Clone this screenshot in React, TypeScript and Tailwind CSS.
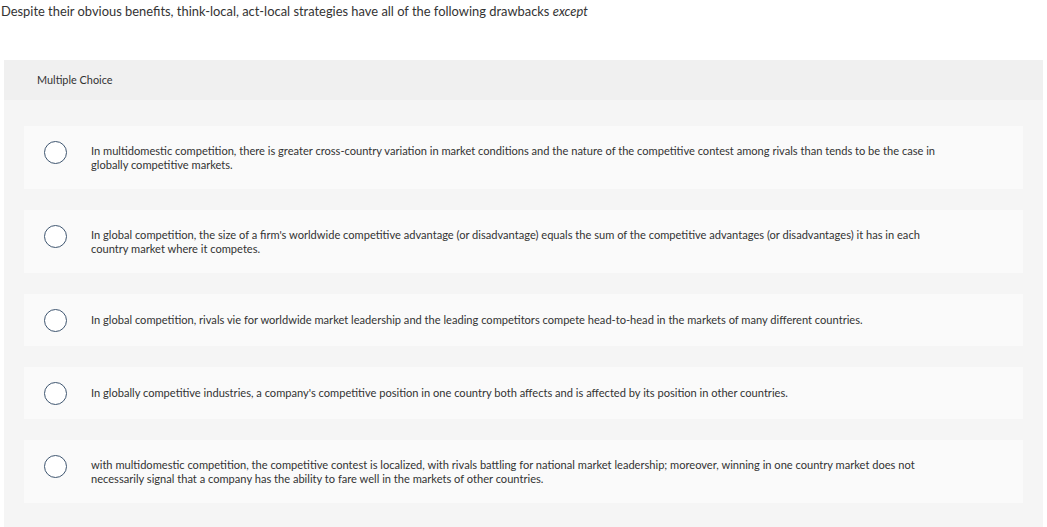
const options = [
  "In multidomestic competition, there is greater cross-country variation in market conditions and the nature of the competitive contest among rivals than tends to be the case in globally competitive markets.",
  "In global competition, the size of a firm's worldwide competitive advantage (or disadvantage) equals the sum of the competitive advantages (or disadvantages) it has in each country market where it competes.",
  "In global competition, rivals vie for worldwide market leadership and the leading competitors compete head-to-head in the markets of many different countries.",
  "In globally competitive industries, a company's competitive position in one country both affects and is affected by its position in other countries.",
  "with multidomestic competition, the competitive contest is localized, with rivals battling for national market leadership; moreover, winning in one country market does not necessarily signal that a company has the ability to fare well in the markets of other countries.",
];

export default function App() {
  return (
    <div className="min-h-[527px] bg-white text-[#333] font-['Lato','Open_Sans',sans-serif]">
      <p className="px-[1px] pt-[3px] h-[60px] text-[12.9px] leading-[16px]">
        Despite their obvious benefits, think-local, act-local strategies have all of the following drawbacks <em>except</em>
      </p>

      <div className="mx-[4px] bg-[#f5f5f5]">
        <div className="h-[40px] bg-[#f0f0f0] pl-[33px] flex items-center text-[10.9px]">
          Multiple Choice
        </div>
        <div className="px-[20px] pt-[26px] pb-[30px] flex flex-col gap-[21px]">
          {options.map((o, i) => (
            <div key={i} className="bg-[#fafafa] flex items-start pl-[20px] pr-[80px] min-h-[52px]">
              <span className="mt-[15px] w-[23px] h-[23px] shrink-0 rounded-full border-[1.5px] border-[#3f5670] bg-white" />
              <span className="self-center ml-[24px] py-[17.5px] text-[11.1px] leading-[14px]">{o}</span>
            </div>
          ))}
        </div>
      </div>
    </div>
  );
}
